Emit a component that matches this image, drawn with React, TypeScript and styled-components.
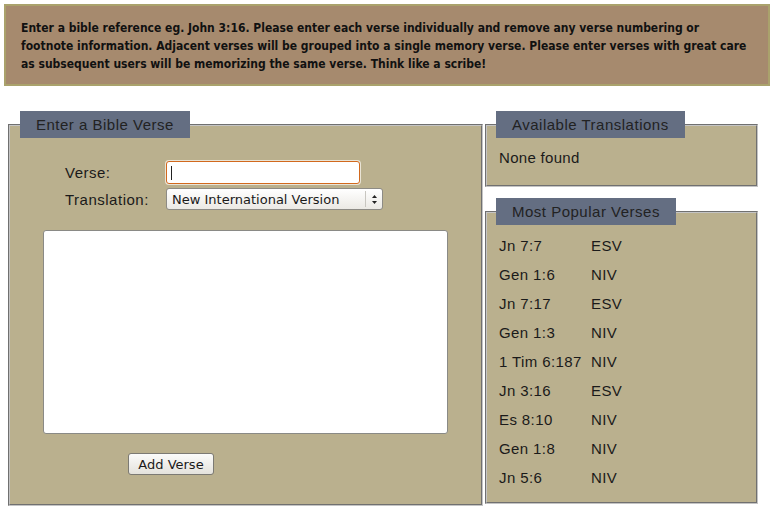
import React from 'react';
import styled, { createGlobalStyle } from 'styled-components';

const GlobalStyle = createGlobalStyle`
  body {
    margin: 0;
    background: #ffffff;
    font-family: "Liberation Sans", Arial, sans-serif;
    color: #1a1a1a;
  }
`;

const Page = styled.div`
  padding: 4px;
`;

const Notice = styled.div`
  border: 2px solid #aaa26c;
  background: #a68a6e;
  padding: 13px 15px 11px 15px;
  font-family: "DejaVu Sans Condensed", "Liberation Sans", sans-serif;
  font-weight: bold;
  font-size: 12px;
  line-height: 18px;
  color: #111;
`;

const Columns = styled.div`
  display: flex;
  align-items: flex-start;
  gap: 2px;
  margin: 25px 0 0 4px;
`;

const Side = styled.div`
  display: flex;
  flex-direction: column;
  gap: 11px;
  width: 273px;
`;

const Panel = styled.fieldset<{ $width?: number; $pad?: number }>`
  margin: 0;
  padding: 0 ${p => p.$pad ?? 10}px;
  border: 2px groove #c4c4c4;
  background: #bab08e;
  width: ${p => (p.$width ? `${p.$width}px` : 'auto')};
  box-sizing: border-box;
  min-width: 0;
`;

const Legend = styled.legend`
  padding: 0 16px;
  height: 27px;
  line-height: 27px;
  background: #646e82;
  color: #222;
  font-size: 15px;
  letter-spacing: 0.5px;
`;

const FormGrid = styled.div`
  display: grid;
  grid-template-columns: 101px auto;
  align-items: center;
  row-gap: 4px;
  margin: 23px 0 0 45px;
`;

const Label = styled.label`
  font-size: 15px;
  letter-spacing: 0.5px;
  color: #1a1a1a;
`;

const TextInput = styled.input`
  width: 194px;
  height: 23px;
  box-sizing: border-box;
  border: 1px solid #d2691e;
  border-radius: 3px;
  box-shadow: 0 0 0 1px #e9e4d6;
  background: #fff linear-gradient(#222, #222) no-repeat 4px 4px / 1px 14px;
  outline: none;
  padding: 0 5px;
`;

const SelectWrap = styled.div`
  position: relative;
  width: 217px;
  height: 22px;
`;

const Select = styled.select`
  appearance: none;
  width: 100%;
  height: 100%;
  box-sizing: border-box;
  border: 1px solid #8d8b85;
  border-radius: 3px;
  background: linear-gradient(#ffffff, #ebe9e4);
  font-family: "DejaVu Sans", sans-serif;
  font-size: 13px;
  color: #1a1a1a;
  padding: 0 0 0 5px;
  outline: none;
`;

const Spinner = styled.span`
  position: absolute;
  top: 3px;
  right: 0;
  width: 17px;
  height: 16px;
  border-left: 1px solid #c8c6c0;
  display: flex;
  align-items: center;
  justify-content: center;
  pointer-events: none;
`;

const TextArea = styled.textarea`
  display: block;
  width: 405px;
  height: 204px;
  box-sizing: border-box;
  margin: 20px 0 0 23px;
  border: 1px solid #8a8a86;
  border-radius: 3px;
  background: #fff;
  resize: none;
  outline: none;
`;

const Button = styled.button`
  display: block;
  margin: 19px 0 29px 108px;
  width: 86px;
  height: 22px;
  border: 1px solid #7c7a74;
  border-radius: 3px;
  background: linear-gradient(#fbfbfa, #e4e2dc);
  font-family: "DejaVu Sans", sans-serif;
  font-size: 13px;
  color: #1a1a1a;
  padding: 0;
`;

const Empty = styled.div`
  font-size: 15px;
  letter-spacing: 0.3px;
  line-height: 20px;
  padding: 10px 3px 17px;
`;

const VerseList = styled.div`
  display: grid;
  grid-template-columns: 92px auto;
  padding: 6px 3px 10px;
`;

const Cell = styled.div`
  font-size: 15px;
  letter-spacing: 0.4px;
  line-height: 29px;
  white-space: nowrap;
`;

const popular = [
  ['Jn 7:7', 'ESV'],
  ['Gen 1:6', 'NIV'],
  ['Jn 7:17', 'ESV'],
  ['Gen 1:3', 'NIV'],
  ['1 Tim 6:187', 'NIV'],
  ['Jn 3:16', 'ESV'],
  ['Es 8:10', 'NIV'],
  ['Gen 1:8', 'NIV'],
  ['Jn 5:6', 'NIV'],
];

export default function App() {
  return (
    <Page>
      <GlobalStyle />
      <Notice>
        Enter a bible reference eg. John 3:16. Please enter each verse individually and remove any verse numbering or
        footnote information. Adjacent verses will be grouped into a single memory verse. Please enter verses with great care
        as subsequent users will be memorizing the same verse. Think like a scribe!
      </Notice>
      <Columns>
        <Panel $width={475}>
          <Legend>Enter a Bible Verse</Legend>
          <FormGrid>
            <Label htmlFor="verse">Verse:</Label>
            <TextInput id="verse" type="text" />
            <Label htmlFor="translation">Translation:</Label>
            <SelectWrap>
              <Select id="translation" defaultValue="niv">
                <option value="niv">New International Version</option>
                <option value="esv">English Standard Version</option>
              </Select>
              <Spinner>
                <svg width="7" height="11" viewBox="0 0 7 11">
                  <path d="M3.5 1 L6 4 H1 Z" fill="#222" />
                  <path d="M3.5 10 L6 7 H1 Z" fill="#222" />
                </svg>
              </Spinner>
            </SelectWrap>
          </FormGrid>
          <TextArea />
          <Button type="button">Add Verse</Button>
        </Panel>
        <Side>
          <Panel $pad={9}>
            <Legend>Available Translations</Legend>
            <Empty>None found</Empty>
          </Panel>
          <Panel $pad={9}>
            <Legend>Most Popular Verses</Legend>
            <VerseList>
              {popular.map(([ref, tr]) => (
                <React.Fragment key={ref}>
                  <Cell>{ref}</Cell>
                  <Cell>{tr}</Cell>
                </React.Fragment>
              ))}
            </VerseList>
          </Panel>
        </Side>
      </Columns>
    </Page>
  );
}
